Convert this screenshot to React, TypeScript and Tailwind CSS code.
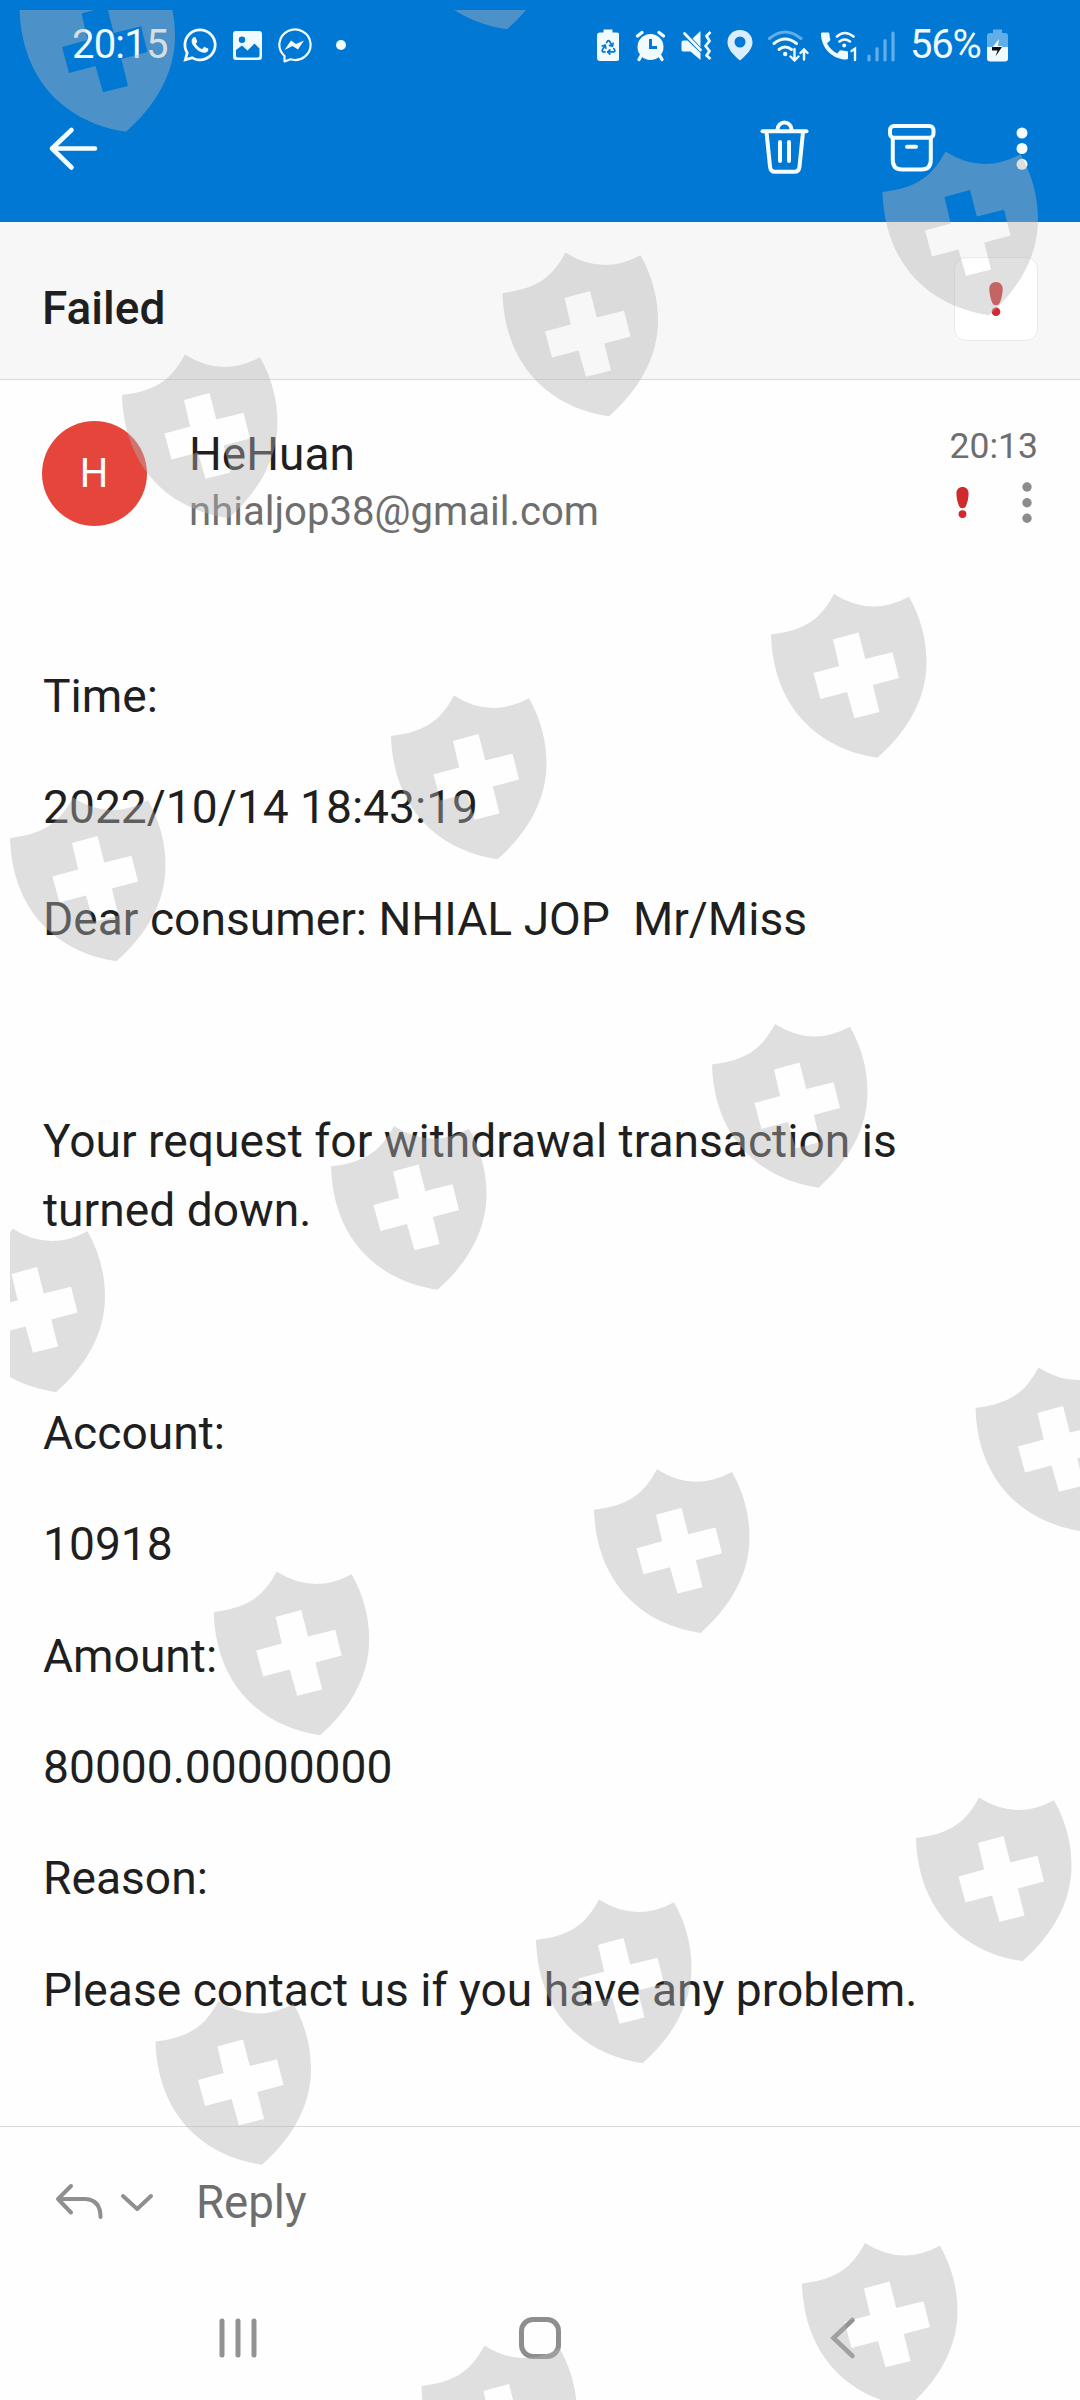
import React from "react";
import { Recycle } from "lucide-react";
import { FaWhatsapp } from "react-icons/fa";
import { MdCall } from "react-icons/md";

const SHIELDS: [number, number][] = [
  [19.5, -32],
  [400.5, -134.5],
  [882.5, 151.5],
  [502.5, 252.5],
  [122, 354.5],
  [771, 594],
  [391, 695.5],
  [10, 797.5],
  [712, 1024],
  [331, 1126],
  [-50.5, 1228.5],
  [975.5, 1367.5],
  [594, 1469.2],
  [213.7, 1571.5],
  [916, 1797.5],
  [536, 1899.5],
  [155.5, 2001],
  [802, 2243],
  [421.5, 2345.5],
];

const PARAGRAPHS = [
  "Time:",
  "2022/10/14 18:43:19",
  "Dear consumer: NHIAL JOP  Mr/Miss",
  "",
  "Your request for withdrawal transaction is turned down.",
  "",
  "Account:",
  "10918",
  "Amount:",
  "80000.00000000",
  "Reason:",
  "Please contact us if you have any problem.",
];

function Watermark() {
  return (
    <svg
      className="absolute inset-0 pointer-events-none"
      width="1080"
      height="2400"
      viewBox="0 0 1080 2400"
    >
      <defs>
        <clipPath id="wm-area">
          <rect x="10" y="10" width="1070" height="2390" />
        </clipPath>
        <path
          id="shield"
          fillRule="evenodd"
          d="M63 0Q99.5 23.5 138 2.7C150 24 155.500 46 155.5 68C155.5 105 136 138 106.5 163.7C47 155 2 113 0 40.5C36 36 50 24 63 0ZM62 45.5L87.5 38.5L94.3 65L121.5 58.2L128 84L101.8 91L108.5 118L83.5 124.3L76 98L49.5 105L42.5 79L68.2 72Z"
        />
      </defs>
      <g clipPath="url(#wm-area)" fill="#b5b5b5" fillOpacity="0.42">
        {SHIELDS.map(([x, y]) => (
          <use key={`${x}-${y}`} href="#shield" x={x} y={y} />
        ))}
      </g>
    </svg>
  );
}

function StatusBar() {
  return (
    <div className="flex h-[90px] items-center pl-[72px] pr-[72px] text-[40px] leading-none text-[#f0faff]">
      <span className="w-[109px] tracking-[-0.8px]">20:15</span>
      <div className="flex h-[38px] items-center">
        <FaWhatsapp size={38} className="shrink-0" />
        <svg className="ml-[14px]" width="30" height="34" viewBox="233 28 30 34">
          <path
            fill="currentColor"
            fillRule="evenodd"
            d="M236 31H259Q262 31 262 34V57Q262 60 259 60H236Q233 60 233 57V34Q233 31 236 31ZM242 36.5A3 3 0 1 0 242 43A3 3 0 1 0 242 36.5ZM236 50L242 45.5L247.5 50.5L254.5 43.5L259.5 48.5V55.5Q259.5 57.5 257.5 57.5H238Q236 57.5 236 55.5Z"
          />
        </svg>
        <svg className="ml-[14px]" width="35" height="36" viewBox="277 28 35 36">
          <path
            fill="none"
            stroke="currentColor"
            strokeWidth="2.2"
            strokeLinejoin="round"
            d="M284.5 57V62.5L290.5 60.3A15.6 15.2 0 1 0 284.5 57Z"
          />
          <path fill="currentColor" d="M284.5 51L291 41.5L296 45L304 41.5L298 50.5L292.5 47Z" />
        </svg>
        <span className="ml-[24px] h-[10px] w-[10px] rounded-full bg-[#f0faff]" />
      </div>

      <div className="ml-auto flex items-center">
        {/* battery protection */}
        <svg width="23" height="34" viewBox="595.5 28 23 34">
          <path
            fill="currentColor"
            d="M603 29.5H612V32.5H616Q619 32.5 619 35.5V58Q619 61 616 61H599.5Q596.5 61 596.5 58V35.5Q596.5 32.5 599.5 32.5H603Z"
          />
          <Recycle x={599.5} y={38.5} size={17} color="#0078d4" strokeWidth={2.4} />
        </svg>
        {/* alarm */}
        <svg className="ml-[16px]" width="31" height="34" viewBox="635 28 31 34">
          <circle cx="650.5" cy="47" r="13" fill="currentColor" />
          <path
            stroke="currentColor"
            strokeWidth="3.4"
            strokeLinecap="round"
            d="M637.5 36L642 32.5M663.5 36L659 32.5M641 56L639 59.5M660 56L662 59.5"
          />
          <path fill="none" stroke="#0078d4" strokeWidth="3" d="M650.5 39V47.5H657" />
        </svg>
        {/* vibrate */}
        <svg className="ml-[15px]" width="31" height="34" viewBox="680.5 28 31 34">
          <path
            fill="currentColor"
            d="M681 42Q681 40.5 683 40.5H687L700 53V60L690 51.5H683Q681 51.5 681 50ZM692 38.5L700 31V47Z"
          />
          <path stroke="currentColor" strokeWidth="2.8" strokeLinecap="round" d="M684 33.5L700 50" />
          <path
            fill="none"
            stroke="currentColor"
            strokeWidth="2.8"
            strokeLinejoin="round"
            d="M710 32L706 36L709 41L705 46L709 51L706 55.5L710 59"
          />
        </svg>
        <svg className="ml-[15px]" width="26" height="34" viewBox="726.5 28 26 34">
          <path
            fill="#d9efff"
            fillRule="evenodd"
            d="M739.5 30C732 30 727 35.5 727 42.5C727 49 733 55 739.5 60.5C746 55 752 49 752 42.5C752 35.5 747 30 739.5 30ZM739.5 36.5A5.5 5.5 0 1 1 739.5 47.5A5.5 5.5 0 1 1 739.5 36.5Z"
          />
        </svg>
        {/* wifi */}
        <svg className="ml-[15px]" width="41" height="34" viewBox="768 28 41 34">
          <g fill="none" stroke="currentColor" strokeWidth="3" strokeLinecap="round">
            <path stroke="#62aee8" d="M769.5 38.5Q785 25.5 801 38.5" />
            <path d="M774 43.5Q785 34.5 796.5 43.5" />
            <path d="M779 49.5Q785 44.5 791.5 49.5" />
            <path
              strokeWidth="2.4"
              d="M794.5 49V60M790.5 56.5L794.5 60.5L798.5 56.5M804 59.5V50M800.5 53L804 49.5L807.5 53"
            />
          </g>
          <circle cx="785.2" cy="54" r="2.2" fill="currentColor" />
        </svg>
        {/* wifi calling */}
        <svg className="ml-[12px]" width="36" height="34" viewBox="820 28 36 34">
          <MdCall x={815.5} y={28} size={36} />
          <g fill="none" stroke="currentColor" strokeWidth="2.6" strokeLinecap="round">
            <path d="M836 36.5Q843.5 29.5 852.5 36.5" />
            <path d="M838.5 41.5Q843.5 37.5 849 41.5" />
            <path d="M850.5 51L854 48.7V60" strokeWidth="2.4" />
          </g>
          <circle cx="843.2" cy="45.5" r="2" fill="currentColor" />
        </svg>
        <svg className="ml-[10px]" width="29" height="34" viewBox="866 28 29 34">
          <path
            stroke="#62aee8"
            strokeWidth="3.2"
            strokeLinecap="round"
            d="M868 56V60M876 48.5V60M884 40.5V60M892 33V60"
          />
        </svg>
        <span className="ml-[14px] w-[72px] tracking-[-1.2px]">56%</span>
        <svg className="ml-[5px]" width="21" height="34" viewBox="987 28 21 34">
          <path
            fill="#62aee8"
            d="M993 29.5H1002V33H1005Q1008 33 1008 36V48H987V36Q987 33 990 33H993Z"
          />
          <path fill="currentColor" d="M987 47H1008V58.5Q1008 61.5 1005 61.5H990Q987 61.5 987 58.5Z" />
          <path fill="currentColor" d="M999 39L991 49H1002V46H998Z" />
          <path fill="#111" d="M992 47H1002L995.5 56.5L997.5 50.5H992Z" />
        </svg>
      </div>
    </div>
  );
}

function Toolbar() {
  return (
    <div className="flex h-[116px] items-center pl-[48px] pr-[52px] text-[#f5fdff]">
      <svg width="52" height="58" viewBox="48 119 52 58">
        <path
          fill="none"
          stroke="currentColor"
          strokeWidth="4.6"
          strokeLinecap="round"
          strokeLinejoin="round"
          d="M95 148.5H52M71.5 130L52 148.5L71.5 167.5"
        />
      </svg>
      <svg className="ml-auto" width="52" height="58" viewBox="758 119 52 58">
        <g fill="none" stroke="currentColor" strokeWidth="4" strokeLinecap="round" strokeLinejoin="round">
          <path d="M762.5 131.2H806.5" />
          <path d="M777.5 131V129.5A7 7 0 0 1 791.5 129.5V131" />
          <path d="M766.5 132L770 166.5Q770.5 171.8 775 171.8H794.5Q799 171.8 799.5 166.5L803 132" />
          <path d="M780 142V161M789 142V161" />
        </g>
      </svg>
      <svg className="ml-[76px]" width="52" height="58" viewBox="886 119 52 58">
        <g fill="none" stroke="currentColor" strokeWidth="4" strokeLinecap="round" strokeLinejoin="round">
          <rect x="890" y="126" width="43.5" height="11.8" rx="4" />
          <path d="M892.8 138.5V160Q892.8 169.5 902 169.5H921.5Q930.8 169.5 930.8 160V138.5" />
          <path d="M907 146.7H916" />
        </g>
      </svg>
      <svg className="ml-[78px]" width="12" height="58" viewBox="1016 119 12 58" fill="currentColor">
        <circle cx="1022" cy="133" r="5.5" />
        <circle cx="1022" cy="148.5" r="5.5" />
        <circle cx="1022" cy="164.3" r="5.5" />
      </svg>
    </div>
  );
}

function Important({ className }: { className: string }) {
  return (
    <svg className={className} viewBox="0 0 14 34" fill="#cf2a2c">
      <path d="M7 0C3 0 .3 3 .3 7C.3 11 1.5 17 3.3 21Q4.2 23.3 7 23.3Q9.8 23.3 10.7 21C12.5 17 13.7 11 13.7 7C13.7 3 11 0 7 0Z" />
      <circle cx="7" cy="29.7" r="4.3" />
    </svg>
  );
}

export default function App() {
  return (
    <div className="relative flex h-[2400px] w-[1080px] flex-col overflow-hidden bg-[#fefefe] font-['Roboto',sans-serif] text-[#1f1f1f]">
      <header className="h-[222px] shrink-0 bg-[#0078d4]">
        <StatusBar />
        <Toolbar />
      </header>

      {/* Subject */}
      <div className="flex h-[158px] shrink-0 items-start justify-between border-b border-[#d9d9d9] bg-[#f7f7f7] pl-[42px] pr-[42px]">
        <h1 className="mt-[51px] text-[46px] leading-[70px] font-medium">Failed</h1>
        <div className="mt-[35px] flex h-[84px] w-[84px] justify-center rounded-xl border border-[#e9e9e9] bg-white pt-[24px]">
          <Important className="h-[34px] w-[14px]" />
        </div>
      </div>

      {/* Sender */}
      <div className="flex h-[282px] shrink-0 items-start pt-[41px] pl-[42px] pr-[42px]">
        <div className="flex h-[105px] w-[105px] items-center justify-center rounded-full bg-[#e6453b] pr-[1px] text-[40px] text-white">
          H
        </div>
        <div className="ml-[42px]">
          <div className="mt-[2px] text-[46px] leading-[62px]">HeHuan</div>
          <div className="mt-[2px] text-[40.1px] leading-[50px] text-[#6e6e6e]">nhialjop38@gmail.com</div>
        </div>
        <div className="ml-auto flex flex-col items-end">
          <span className="mt-[5px] text-[35.5px] leading-[40px] text-[#6e6e6e]">20:13</span>
          <div className="mt-[15px] flex items-start pr-[6px]">
            <Important className="mt-[6px] h-[31px] w-[13px]" />
            <svg className="ml-[53px]" width="10" height="44" viewBox="0 0 10 44" fill="#8c8c8c">
              <circle cx="5" cy="6" r="4.7" />
              <circle cx="5" cy="21.7" r="4.7" />
              <circle cx="5" cy="37.3" r="4.7" />
            </svg>
          </div>
        </div>
      </div>

      {/* Message */}
      <main className="flex w-[980px] flex-1 flex-col gap-[42.35px] pl-[43px] text-[46.16px] leading-[69px] whitespace-pre-wrap">
        {PARAGRAPHS.map((text, i) => (
          <p key={i} className="min-h-[69px]">
            {text}
          </p>
        ))}
      </main>

      {/* Reply bar */}
      <div className="flex h-[150px] shrink-0 items-center border-t border-[#d9d9d9] pl-[54px] text-[#8f8f8f]">
        <svg width="102" height="44" viewBox="54.5 2180.5 102 44">
          <g fill="none" stroke="currentColor" strokeWidth="4" strokeLinecap="round" strokeLinejoin="round">
            <path d="M71.5 2186.5L58.5 2199.5L71.5 2213M58.5 2199.5H86Q101 2200.5 101 2217.5" />
            <path d="M123.5 2196.5L137.7 2209.5L151.5 2196.5" />
          </g>
        </svg>
        <span className="mt-[2px] ml-[40px] text-[45.6px] leading-[70px] text-[#6e6e6e]">Reply</span>
      </div>

      {/* System navigation */}
      <div className="flex h-[124px] shrink-0 items-center pl-[217px] text-[#929292]">
        <svg width="42" height="46" viewBox="217 2315 42 46">
          <path
            stroke="currentColor"
            strokeWidth="5"
            strokeLinecap="round"
            d="M222 2321V2355M238 2321V2355M254 2321V2355"
          />
        </svg>
        <div className="ml-[260px] h-[42px] w-[42px] rounded-[14px] border-5 border-[#8e8e8e]" />
        <svg className="ml-[268px]" width="30" height="46" viewBox="829 2315 30 46">
          <path
            fill="none"
            stroke="currentColor"
            strokeWidth="4.6"
            strokeLinecap="round"
            d="M852.5 2320L833.5 2338L852.5 2356"
          />
        </svg>
      </div>

      <Watermark />
    </div>
  );
}
